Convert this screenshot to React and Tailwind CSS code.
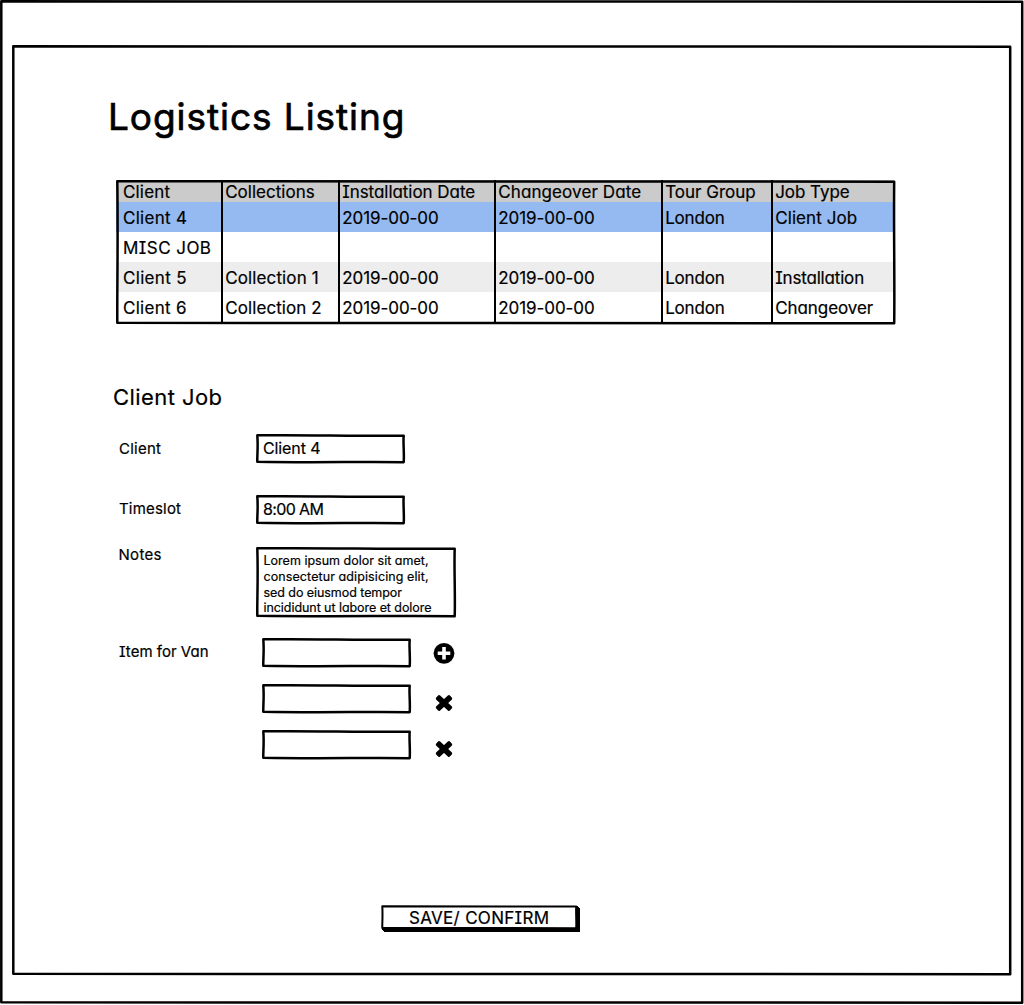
import { useLayoutEffect, useRef, useState } from "react";

// Text whose tracking is adjusted so that it spans the given width.
function Fit({ w, className = "", children }) {
  const ref = useRef(null);
  const [spacing, setSpacing] = useState(0);
  useLayoutEffect(() => {
    const natural = ref.current.getBoundingClientRect().width;
    setSpacing((w - natural) / (children.length - 1));
  }, []);
  return (
    <span ref={ref} className={"inline-block whitespace-pre " + className} style={{ letterSpacing: spacing + "px" }}>
      {children}
    </span>
  );
}

// Slightly uneven, pen-like outline laid over a box of w by h pixels.
function Outline({ w, h, wobble = 0.7, stroke = 2.5 }) {
  const k = wobble;
  const l = 1.3;
  const r = w - 1.3;
  const b = h - 1.3;
  const d =
    `M${l} ${l} C${w * 0.3} ${l - k} ${w * 0.6} ${l + k} ${r} ${l + k * 0.6}` +
    ` C${r - k} ${h * 0.3} ${r + k} ${h * 0.7} ${r} ${b}` +
    ` C${w * 0.7} ${b - k} ${w * 0.4} ${b + k} ${l} ${b - k * 0.6}` +
    ` C${l - k * 0.4} ${h * 0.75} ${l + k * 1.4} ${h * 0.45} ${l} ${l} Z`;
  return (
    <svg className="pointer-events-none absolute left-0 top-0 overflow-visible" width={w} height={h} fill="none">
      <path d={d} stroke="#000" strokeWidth={stroke} strokeLinejoin="round" />
    </svg>
  );
}

const columns = [
  ["Client", 47],
  ["Collections", 89.5],
  ["Installation Date", 133],
  ["Changeover Date", 143],
  ["Tour Group", 90.5],
  ["Job Type", 74.5],
];
const date = ["2019-00-00", 96.5];
const london = ["London", 59.5];
const rows = [
  { bg: "bg-[#95baf2]", cells: [["Client 4", 64], null, date, date, london, ["Client Job", 82]] },
  { bg: "bg-white", cells: [["MISC JOB", 88], null, null, null, null, null] },
  { bg: "bg-[#ededed]", cells: [["Client 5", 63.5], ["Collection 1", 93.5], date, date, london, ["Installation", 89]] },
  { bg: "bg-white", cells: [["Client 6", 63.5], ["Collection 2", 96.5], date, date, london, ["Changeover", 98]] },
];
const grid = "grid grid-cols-[105px_117px_156px_167px_110px_123px]";

function Row({ cells, className }) {
  return (
    <div className={grid + " " + className}>
      {cells.map((c, i) => (
        <div key={i} className={i ? "border-l-2 border-black pl-[2.2px]" : "pl-[7px]"}>
          {c && <Fit w={c[1]}>{c[0]}</Fit>}
        </div>
      ))}
    </div>
  );
}

function Field({ w = 149, h = 29.5, className = "", children }) {
  return (
    <div className={"relative " + className}>
      <Outline w={w} h={h} />
      {children}
    </div>
  );
}

function Plus() {
  return (
    <svg width="22" height="22" viewBox="0 0 22 22" className="shrink-0">
      <circle cx="11" cy="11.3" r="10.4" />
      <path d="M11 5v12.6M4.7 11.3h12.6" stroke="#fff" strokeWidth="3.6" />
    </svg>
  );
}

function Cross() {
  return (
    <svg width="22" height="22" viewBox="0 0 22 22" className="shrink-0">
      <g transform="translate(11 11)">
        <rect x="-9.5" y="-2.8" width="19" height="5.6" rx="1.6" transform="rotate(43)" />
        <rect x="-9.5" y="-2.8" width="19" height="5.6" rx="1.6" transform="rotate(-43)" />
      </g>
    </svg>
  );
}

const notes = [
  ["Lorem ipsum dolor sit amet,", 165],
  ["consectetur adipisicing elit,", 165],
  ["sed do eiusmod tempor", 138.5],
  ["incididunt ut labore et dolore", 168],
];

export default function App() {
  return (
    <div className="relative h-[1005px] w-[1024px] overflow-hidden bg-white pl-[12px] pt-[45px] font-['Inter',sans-serif] text-black [-webkit-text-stroke:0.2px_#000] [font-feature-settings:'cv11','cv08']">
      <div className="absolute left-0 top-0">
        <div className="relative">
          <Outline w={1023.5} h={1004} wobble={0.6} />
        </div>
      </div>
      <main className="relative h-[930px] w-[999px] pl-[96px] pt-[48px]">
        <Outline w={999.5} h={930.5} wobble={0.6} />
        <h1 className="h-[48px] text-[37px] leading-[48px] [-webkit-text-stroke:0.7px_#000]">
          <Fit w={296.5}>Logistics Listing</Fit>
        </h1>

        <div className="relative ml-[8px] mt-[39px] h-[144px] w-[779px] text-[17px]">
          <Row cells={columns} className="h-[22px] w-[778px] bg-[#cbcbcb] leading-[24px]" />
          {rows.map((r, i) => (
            <Row key={i} cells={r.cells} className={"h-[30px] w-[778px] leading-[32px] " + r.bg} />
          ))}
          <Outline w={779.5} h={144.5} wobble={0.6} />
        </div>

        <h2 className="mt-[60px] h-[26px] pl-[5px] text-[22px] leading-[26px]">
          <Fit w={109}>Client Job</Fit>
        </h2>

        <form className="pl-[10px] text-[15px]">
          <div className="mt-[24px] flex h-[29px]">
            <div className="w-[138px] pl-[1px] leading-[29px]"><Fit w={42}>Client</Fit></div>
            <Field className="h-[29px] w-[149px] pl-[7px] text-[16px] leading-[28px]"><Fit w={57.5}>Client 4</Fit></Field>
          </div>
          <div className="mt-[32px] flex h-[29px]">
            <div className="w-[138px] pl-[1px] leading-[27px]"><Fit w={62}>Timeslot</Fit></div>
            <Field className="h-[29px] w-[149px] pl-[7px] text-[16px] leading-[28px]"><Fit w={61}>8:00 AM</Fit></Field>
          </div>
          <div className="mt-[23px] flex h-[70px]">
            <div className="w-[138px] pl-[0.5px] leading-[15px]"><Fit w={43}>Notes</Fit></div>
            <Field w={200} h={70.5} className="h-[70px] w-[200px] pl-[7.5px] pt-[6px] text-[12.5px] leading-[15.8px]">
              {notes.map(([t, w]) => (
                <div key={t}><Fit w={w}>{t}</Fit></div>
              ))}
            </Field>
          </div>
          <div className="mt-[21px] flex h-[29px]">
            <div className="w-[144px] pl-[1px] leading-[27px]"><Fit w={89.5}>Item for Van</Fit></div>
            <Field className="h-[29px] w-[149px]" />
            <div className="ml-[22px] pt-[4px]"><Plus /></div>
          </div>
          <div className="mt-[17px] flex h-[29px] pl-[144px]">
            <Field className="h-[29px] w-[149px]" />
            <div className="ml-[22px] pt-[8px]"><Cross /></div>
          </div>
          <div className="mt-[17px] flex h-[29px] pl-[144px]">
            <Field className="h-[29px] w-[149px]" />
            <div className="ml-[22px] pt-[8px]"><Cross /></div>
          </div>
          <button type="button" className="relative ml-[263px] mt-[146px] block h-[24px] w-[196px] bg-white pl-[28px] text-left text-[17px] leading-[26px] shadow-[3px_3px_0_#000,2px_2px_0_#000,1px_1px_0_#000]">
            <Outline w={196.5} h={24.5} wobble={0.4} stroke={2} />
            <Fit w={140}>SAVE/ CONFIRM</Fit>
          </button>
        </form>
      </main>
    </div>
  );
}
